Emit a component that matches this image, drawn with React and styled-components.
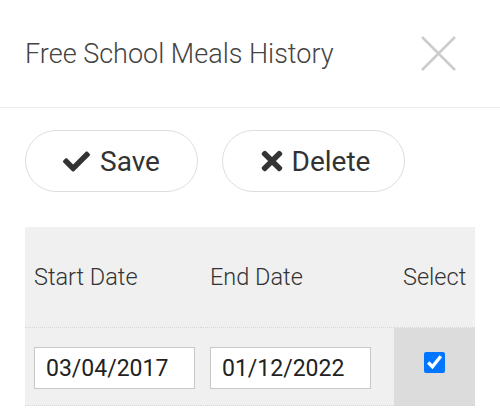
import React from "react";
import styled, { createGlobalStyle } from "styled-components";
import { FaCheck, FaTimes } from "react-icons/fa";

const GlobalStyle = createGlobalStyle`
  html, body { margin: 0; padding: 0; background: #fff; }
  body { font-family: Roboto, "Noto Sans", Arial, sans-serif; color: #333; }
  * { box-sizing: border-box; }
`;

const Page = styled.div`
  width: 500px;
  height: 420px;
  overflow: hidden;
`;

const Header = styled.header`
  height: 108px;
  border-bottom: 1px solid #ececec;
  display: flex;
  align-items: center;
  justify-content: space-between;
  padding: 0 44px 0 25px;
`;

const Title = styled.h1`
  margin: 0;
  font-size: 27px;
  font-weight: 300;
  color: #444;
  letter-spacing: 0;
`;

const CloseButton = styled.button`
  border: 0;
  background: none;
  padding: 0;
  width: 35px;
  height: 35px;
  display: flex;
  cursor: pointer;
`;

const Toolbar = styled.div`
  display: flex;
  gap: 24px;
  padding: 22px 25px 0;
`;

const PillButton = styled.button`
  height: 62px;
  width: ${(p) => p.$w}px;
  border: 1px solid #dedede;
  border-radius: 31px;
  background: #fff;
  display: flex;
  align-items: center;
  justify-content: center;
  gap: ${(p) => p.$gap}px;
  font-family: Roboto, Arial, sans-serif;
  font-size: 28px;
  font-weight: 400;
  color: #333;
  padding: 0;
  cursor: pointer;
  svg { color: #333; }
`;

const Table = styled.div`
  margin: 35px 25px 0;
  width: 450px;
  background: #f0f0f0;
  display: grid;
  grid-template-columns: 176px 193px 81px;
`;

const HeadCell = styled.div`
  height: 101px;
  display: flex;
  align-items: center;
  padding-left: 9px;
  font-size: 23.5px;
  font-weight: 300;
  color: #333;
  border-bottom: 1px dotted #d6d6d6;
`;

const BodyCell = styled.div`
  height: 78px;
  display: flex;
  align-items: flex-start;
  justify-content: ${(p) => (p.$center ? "center" : "flex-start")};
  padding: ${(p) => (p.$center ? "24px 0 0" : "19px 0 0 9px")};
  background: ${(p) => (p.$shade ? "#dcdcdc" : "transparent")};
  border-bottom: 1px dotted #d6d6d6;
`;

const DateInput = styled.input`
  width: 161px;
  height: 42px;
  border: 1px solid #c8c8c8;
  background: #fff;
  padding: 0 0 0 11px;
  font-family: Roboto, Arial, sans-serif;
  font-size: 23px;
  color: #222;
  outline: none;
`;

const Check = styled.input`
  width: 21px;
  height: 21px;
  margin: 0;
`;

export default function App() {
  return (
    <Page>
      <GlobalStyle />
      <Header>
        <Title>Free School Meals History</Title>
        <CloseButton aria-label="Close">
          <svg width="35" height="35" viewBox="0 0 35 35">
            <path d="M1 1 L34 34 M34 1 L1 34" stroke="#cccccc" strokeWidth="2.6" fill="none" />
          </svg>
        </CloseButton>
      </Header>
      <Toolbar>
        <PillButton $w={173} $gap={10}>
          <FaCheck size={27} />
          Save
        </PillButton>
        <PillButton $w={183} $gap={5}>
          <FaTimes size={30} />
          Delete
        </PillButton>
      </Toolbar>
      <Table>
        <HeadCell>Start Date</HeadCell>
        <HeadCell>End Date</HeadCell>
        <HeadCell>Select</HeadCell>
        <BodyCell>
          <DateInput defaultValue="03/04/2017" />
        </BodyCell>
        <BodyCell>
          <DateInput defaultValue="01/12/2022" />
        </BodyCell>
        <BodyCell $center $shade>
          <Check type="checkbox" defaultChecked />
        </BodyCell>
      </Table>
    </Page>
  );
}
